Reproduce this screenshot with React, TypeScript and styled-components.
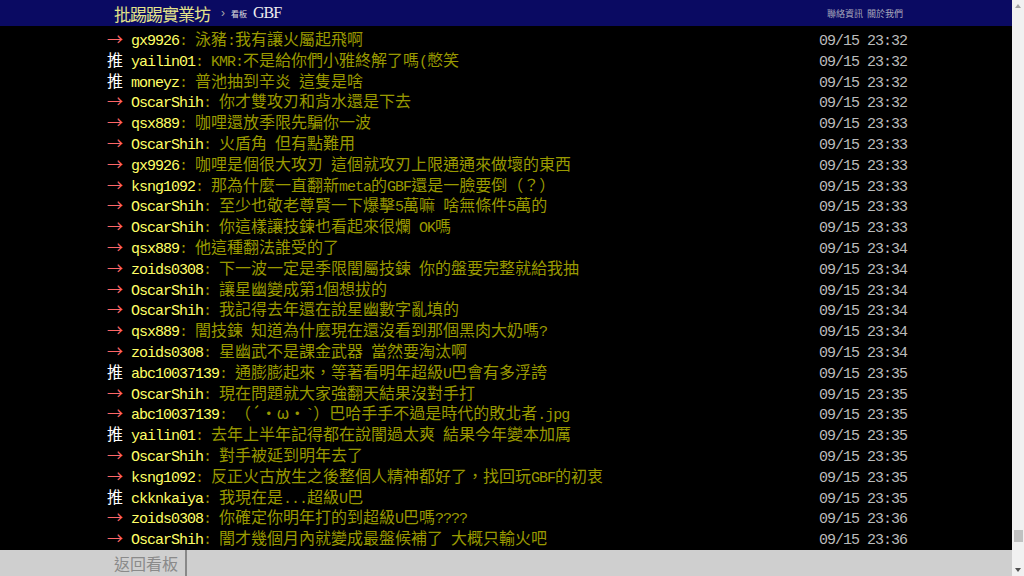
import React from "react";
import styled, { createGlobalStyle } from "styled-components";

type Push = { tag: "推" | "→"; user: string; text: string; time: string };

const pushes: Push[] = [
  { tag: "→", user: "gx9926", text: "泳豬:我有讓火屬起飛啊", time: "09/15 23:32" },
  { tag: "推", user: "yailin01", text: "KMR:不是給你們小雅終解了嗎(憋笑", time: "09/15 23:32" },
  { tag: "推", user: "moneyz", text: "普池抽到辛炎 這隻是啥", time: "09/15 23:32" },
  { tag: "→", user: "OscarShih", text: "你才雙攻刃和背水還是下去", time: "09/15 23:32" },
  { tag: "→", user: "qsx889", text: "咖哩還放季限先騙你一波", time: "09/15 23:33" },
  { tag: "→", user: "OscarShih", text: "火盾角 但有點難用", time: "09/15 23:33" },
  { tag: "→", user: "gx9926", text: "咖哩是個很大攻刃 這個就攻刃上限通通來做壞的東西", time: "09/15 23:33" },
  { tag: "→", user: "ksng1092", text: "那為什麼一直翻新meta的GBF還是一臉要倒（？）", time: "09/15 23:33" },
  { tag: "→", user: "OscarShih", text: "至少也敬老尊賢一下爆擊5萬嘛 啥無條件5萬的", time: "09/15 23:33" },
  { tag: "→", user: "OscarShih", text: "你這樣讓技鍊也看起來很爛 OK嗎", time: "09/15 23:33" },
  { tag: "→", user: "qsx889", text: "他這種翻法誰受的了", time: "09/15 23:34" },
  { tag: "→", user: "zoids0308", text: "下一波一定是季限闇屬技鍊 你的盤要完整就給我抽", time: "09/15 23:34" },
  { tag: "→", user: "OscarShih", text: "讓星幽變成第1個想拔的", time: "09/15 23:34" },
  { tag: "→", user: "OscarShih", text: "我記得去年還在說星幽數字亂填的", time: "09/15 23:34" },
  { tag: "→", user: "qsx889", text: "闇技鍊 知道為什麼現在還沒看到那個黑肉大奶嗎?", time: "09/15 23:34" },
  { tag: "→", user: "zoids0308", text: "星幽武不是課金武器 當然要淘汰啊", time: "09/15 23:34" },
  { tag: "推", user: "abc10037139", text: "通膨膨起來，等著看明年超級U巴會有多浮誇", time: "09/15 23:35" },
  { tag: "→", user: "OscarShih", text: "現在問題就大家強翻天結果沒對手打", time: "09/15 23:35" },
  { tag: "→", user: "abc10037139", text: "（´・ω・`）巴哈手手不過是時代的敗北者.jpg", time: "09/15 23:35" },
  { tag: "推", user: "yailin01", text: "去年上半年記得都在說闇過太爽 結果今年變本加厲", time: "09/15 23:35" },
  { tag: "→", user: "OscarShih", text: "對手被延到明年去了", time: "09/15 23:35" },
  { tag: "→", user: "ksng1092", text: "反正火古放生之後整個人精神都好了，找回玩GBF的初衷", time: "09/15 23:35" },
  { tag: "推", user: "ckknkaiya", text: "我現在是...超級U巴", time: "09/15 23:35" },
  { tag: "→", user: "zoids0308", text: "你確定你明年打的到超級U巴嗎????", time: "09/15 23:36" },
  { tag: "→", user: "OscarShih", text: "闇才幾個月內就變成最盤候補了 大概只輸火吧", time: "09/15 23:36" },
];

// ascii runs get the narrow mono face, the rest stays full width
const runs = (s: string) =>
  s.split(/([\x20-\x7e]+)/).map((part, i) =>
    /^[\x20-\x7e]+$/.test(part) ? <Half key={i}>{part}</Half> : part
  );

const App = () => (
  <>
    <GlobalStyle />
    <Screen>
      <Main>
        <TopBar>
          <Logo>批踢踢實業坊</Logo>
          <Crumb>›</Crumb>
          <BoardLabel>看板</BoardLabel>
          <BoardName>GBF</BoardName>
          <TopLinks>
            <TopLink>聯絡資訊</TopLink>
            <TopLink>關於我們</TopLink>
          </TopLinks>
        </TopBar>

        <Content>
          {pushes.map((p, i) => (
            <PushRow key={i}>
              <PushBody>
                <PushTag $push={p.tag === "推"}>{p.tag}</PushTag>
                <Half> </Half>
                <PushUser>{runs(p.user)}</PushUser>
                <PushText>{runs(": " + p.text)}</PushText>
              </PushBody>
              <PushTime>{runs(p.time)}</PushTime>
            </PushRow>
          ))}
        </Content>

        <Footer>
          <BackLink>返回看板</BackLink>
          <FooterRule />
        </Footer>
      </Main>

      <ScrollTrack>
        <ArrowUp />
        <TrackSpace>
          <Thumb />
        </TrackSpace>
        <ArrowDown />
      </ScrollTrack>
    </Screen>
  </>
);

export default App;

// ── Styles ──────────────────────────────────────────────────────────

const GlobalStyle = createGlobalStyle`
  html, body {
    margin: 0;
    padding: 0;
    background: #000;
    overflow: hidden;
  }
  body {
    font-family: "Noto Sans CJK TC", "Liberation Mono", monospace;
  }
`;

const Screen = styled.div`
  display: flex;
  width: 1024px;
  height: 576px;
`;

const Main = styled.div`
  flex: 1;
  display: flex;
  flex-direction: column;
  min-width: 0;
`;

const TopBar = styled.div`
  height: 26px;
  flex: none;
  display: flex;
  align-items: center;
  padding: 0 109px 0 114px;
  background: #0a0a62;
  color: #ddd;
`;

const Logo = styled.span`
  font-size: 17px;
  letter-spacing: -1px;
  color: #e4e48a;
  line-height: 1;
`;

const Crumb = styled.span`
  margin: 0 6px 0 11px;
  font-family: "Liberation Sans", sans-serif;
  font-size: 12px;
  color: #aaa;
`;

const BoardLabel = styled.span`
  font-size: 8px;
  color: #ddd;
  margin-right: 6px;
`;

const BoardName = styled.span`
  font-family: "Liberation Serif", serif;
  font-size: 16px;
  letter-spacing: -1px;
  color: #eee;
`;

const TopLinks = styled.div`
  margin-left: auto;
  display: flex;
  gap: 4px;
`;

const TopLink = styled.span`
  font-size: 9px;
  color: #a8a8bc;
`;

const Content = styled.div`
  flex: 1;
  overflow: hidden;
  padding: 2px 0 0 107px;
`;

const PushRow = styled.div`
  width: 800px;
  height: 20.8px;
  line-height: 20.8px;
  display: flex;
  font-size: 16px;
  white-space: pre;
`;

const PushBody = styled.div`
  flex: 1;
`;

const Half = styled.span`
  font-family: "Liberation Mono", monospace;
  font-size: 15px;
  letter-spacing: -1px;
`;

const PushTag = styled.span<{ $push: boolean }>`
  color: ${(p) => (p.$push ? "#fff" : "#f66")};
`;

const PushUser = styled.span`
  color: #ff6;
`;

const PushText = styled.span`
  color: #990;
`;

const PushTime = styled.span`
  color: #bbb;
`;

const Footer = styled.div`
  height: 26px;
  flex: none;
  display: flex;
  align-items: stretch;
  background: #cfcfcf;
`;

const BackLink = styled.span`
  padding: 0 7px 0 114px;
  font-size: 16px;
  line-height: 26px;
  color: #8a8a8a;
`;

const FooterRule = styled.div`
  width: 2px;
  background: #888;
`;

const ScrollTrack = styled.div`
  width: 12px;
  flex: none;
  display: flex;
  flex-direction: column;
  background: #f1f1f1;
`;

const ArrowUp = styled.div`
  height: 12px;
  display: flex;
  align-items: center;
  justify-content: center;
  &::before {
    content: "";
    border: 3px solid transparent;
    border-top: 0;
    border-bottom: 4px solid #a3a3a3;
  }
`;

const ArrowDown = styled(ArrowUp)`
  &::before {
    border-bottom: 0;
    border-top: 4px solid #505050;
  }
`;

const TrackSpace = styled.div`
  flex: 1;
  display: flex;
  flex-direction: column;
  justify-content: flex-end;
  padding: 0 1px 22px 2px;
`;

const Thumb = styled.div`
  height: 12px;
  background: #c1c1c1;
`;
